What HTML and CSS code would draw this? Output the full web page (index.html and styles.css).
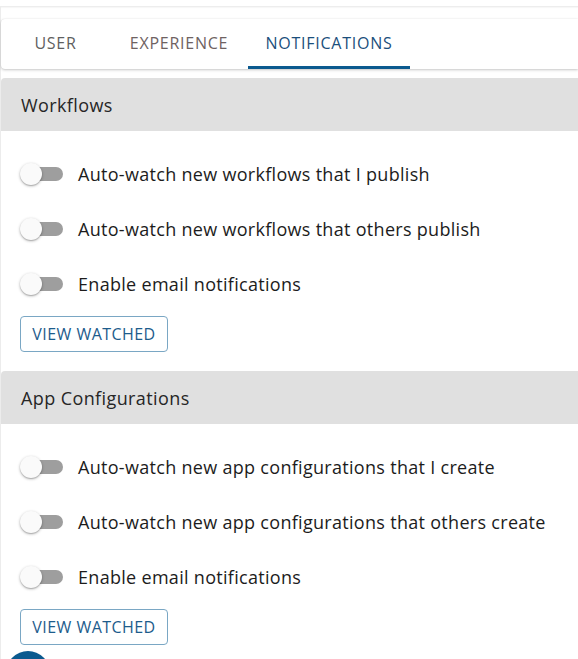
FILE: index.html
```html
<!DOCTYPE html>
<html lang="en">
<head>
<meta charset="utf-8">
<title>Notifications settings</title>
<link rel="stylesheet" href="styles.css">
</head>
<body>
<div class="appbar-edge"></div>
<div class="page">
  <nav class="tabs">
    <div class="tab tab-first">USER</div>
    <div class="tab tab-exp">EXPERIENCE</div>
    <div class="tab tab-active">NOTIFICATIONS</div>
  </nav>

  <section class="panel">
    <header class="panel-head">Workflows</header>
    <div class="panel-body">
      <div class="row"><span class="switch"><span class="track"></span><span class="thumb"></span></span><span class="label">Auto-watch new workflows that I publish</span></div>
      <div class="row"><span class="switch"><span class="track"></span><span class="thumb"></span></span><span class="label">Auto-watch new workflows that others publish</span></div>
      <div class="row"><span class="switch"><span class="track"></span><span class="thumb"></span></span><span class="label">Enable email notifications</span></div>
      <button class="btn">VIEW WATCHED</button>
    </div>
  </section>

  <section class="panel">
    <header class="panel-head">App Configurations</header>
    <div class="panel-body">
      <div class="row"><span class="switch"><span class="track"></span><span class="thumb"></span></span><span class="label">Auto-watch new app configurations that I create</span></div>
      <div class="row"><span class="switch"><span class="track"></span><span class="thumb"></span></span><span class="label">Auto-watch new app configurations that others create</span></div>
      <div class="row"><span class="switch"><span class="track"></span><span class="thumb"></span></span><span class="label">Enable email notifications</span></div>
      <button class="btn">VIEW WATCHED</button>
    </div>
  </section>
</div>
<div class="fab"></div>
</body>
</html>
```
FILE: styles.css
```css
html, body {
  margin: 0;
  padding: 0;
  background: #ffffff;
  overflow: hidden;
}
body {
  font-family: "Open Sans", "Lato", "Liberation Sans", sans-serif;
  color: #212121;
  width: 578px;
  height: 659px;
  position: relative;
}
.appbar-edge {
  height: 6px;
  border-bottom: 1px solid #ededed;
  box-shadow: 0 1px 1px rgba(0,0,0,0.03);
}
.page {
  padding-top: 12px;
  border-left: 1px solid #ececec;
}
.tabs {
  display: flex;
  height: 50px;
  border-radius: 4px 0 0 4px;
  background: #fff;
  box-shadow: 0 1px 3px rgba(0,0,0,0.22), 0 0 1px rgba(0,0,0,0.12);
  margin-bottom: 9px;
}
.tab {
  display: flex;
  align-items: center;
  justify-content: center;
  font-size: 16px;
  letter-spacing: 0.75px;
  color: #5f5f5f;
  padding: 0 16px;
  box-sizing: border-box;
  border-bottom: 3px solid transparent;
  padding-top: 1px;
}
.tab-first { min-width: 109px; }
.tab-exp { color: #6e6262; min-width: 138px; }
.tab-active {
  color: #1b4f7c;
  min-width: 162px;
  border-bottom-color: #0b5a8f;
}
.panel-head {
  height: 53px;
  background: #e0e0e0;
  display: flex;
  align-items: center;
  padding-left: 20px;
  font-size: 18px;
  letter-spacing: 0.4px;
  color: #262626;
  border-radius: 4px 0 0 0;
}
.panel-body {
  padding: 15px 0 19px 19px;
}
.row {
  height: 55px;
  display: flex;
  align-items: center;
}
.switch {
  position: relative;
  width: 44px;
  height: 22px;
  margin-right: 14px;
  flex: none;
}
.track {
  position: absolute;
  left: 3px;
  right: 1px;
  top: 4px;
  height: 14px;
  border-radius: 7px;
  background: #9e9e9e;
}
.thumb {
  position: absolute;
  left: 0;
  top: 0;
  width: 22px;
  height: 22px;
  border-radius: 50%;
  background: #fafafa;
  box-shadow: 0 1px 3px rgba(0,0,0,0.3), 0 1px 1px rgba(0,0,0,0.14);
}
.label {
  font-size: 18px;
  letter-spacing: 0.3px;
  color: #1c1c1c;
}
.btn {
  margin-top: 5px;
  height: 36px;
  width: 148px;
  background: #fff;
  border: 1px solid #7aa7c4;
  border-radius: 4px;
  color: #1d5c8c;
  font-family: inherit;
  font-size: 16px;
  letter-spacing: 0.45px;
  padding: 0;
  display: block;
}
.fab {
  position: absolute;
  left: 6px;
  top: 651px;
  width: 44px;
  height: 44px;
  border-radius: 50%;
  background: #0b5a8f;
}
```
